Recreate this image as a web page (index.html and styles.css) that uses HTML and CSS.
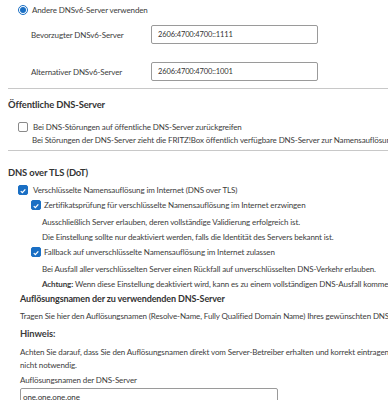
FILE: index.html
```html
<!DOCTYPE html>
<html lang="de">
<head>
  <meta charset="UTF-8" />
  <title>DNS-Server</title>
  <link rel="stylesheet" href="styles.css">
</head>
<body>
  <div class="page">

    <!-- DNSv6 servers -->
    <div class="opt-row">
      <span class="radio"><span class="radio-dot"></span></span>
      <span>Andere DNSv6-Server verwenden</span>
    </div>
    <div class="field-row">
      <label class="field-label">Bevorzugter DNSv6-Server</label>
      <div class="input">2606:4700:4700::1111</div>
    </div>
    <div class="field-row second">
      <label class="field-label">Alternativer DNSv6-Server</label>
      <div class="input">2606:4700:4700::1001</div>
    </div>

    <div class="sep"></div>

    <!-- Public DNS -->
    <div class="section-title first">Öffentliche DNS-Server</div>
    <div class="opt-row check-row">
      <span class="check"></span>
      <span>Bei DNS-Störungen auf öffentliche DNS-Server zurückgreifen</span>
    </div>
    <div class="desc lvl1">Bei Störungen der DNS-Server zieht die FRITZ!Box öffentlich verfügbare DNS-Server zur Namensauflösung heran.</div>

    <div class="sep lower"></div>

    <!-- DNS over TLS -->
    <div class="section-title dot">DNS over TLS (DoT)</div>
    <div class="opt-row check-row tls">
      <span class="check on"><svg viewBox="0 0 10 10" width="10" height="10"><path d="M2.2 5.2 L4.2 7.1 L7.9 3" fill="none" stroke="#fff" stroke-width="1.6"/></svg></span>
      <span>Verschlüsselte Namensauflösung im Internet (DNS over TLS)</span>
    </div>
    <div class="opt-row check-row sub">
      <span class="check on"><svg viewBox="0 0 10 10" width="10" height="10"><path d="M2.2 5.2 L4.2 7.1 L7.9 3" fill="none" stroke="#fff" stroke-width="1.6"/></svg></span>
      <span>Zertifikatsprüfung für verschlüsselte Namensauflösung im Internet erzwingen</span>
    </div>
    <div class="desc lvl2 gap">Ausschließlich Server erlauben, deren vollständige Validierung erfolgreich ist.</div>
    <div class="desc lvl2">Die Einstellung sollte nur deaktiviert werden, falls die Identität des Servers bekannt ist.</div>
    <div class="opt-row check-row sub flush">
      <span class="check on"><svg viewBox="0 0 10 10" width="10" height="10"><path d="M2.2 5.2 L4.2 7.1 L7.9 3" fill="none" stroke="#fff" stroke-width="1.6"/></svg></span>
      <span>Fallback auf unverschlüsselte Namensauflösung im Internet zulassen</span>
    </div>
    <div class="desc lvl2 gap">Bei Ausfall aller verschlüsselten Server einen Rückfall auf unverschlüsselten DNS-Verkehr erlauben.</div>
    <div class="desc lvl2"><b>Achtung:</b> Wenn diese Einstellung deaktiviert wird, kann es zu einem vollständigen DNS-Ausfall kommen.</div>

    <!-- Resolve names -->
    <div class="block">
      <div class="sub-title">Auflösungsnamen der zu verwendenden DNS-Server</div>
      <div class="text gap">Tragen Sie hier den Auflösungsnamen (Resolve-Name, Fully Qualified Domain Name) Ihres gewünschten DNS-Servers ein.</div>
      <div class="text hint">Hinweis:</div>
      <div class="text wrap">Achten Sie darauf, dass Sie den Auflösungsnamen direkt vom Server-Betreiber erhalten und korrekt eintragen. Eine Angabe des Ports ist<br>nicht notwendig.</div>
      <div class="text label">Auflösungsnamen der DNS-Server</div>
      <div class="input wide">one.one.one.one</div>
    </div>

  </div>
</body>
</html>
```

FILE: styles.css
```css
body {
  margin: 0;
  padding: 0;
  background-color: #fff;
  color: #3c3c3c;
  font-family: "Source Sans Pro", Lato, "Noto Sans", sans-serif;
  font-size: 8px;
  letter-spacing: -0.12px;
  overflow: hidden;
}

.page {
  padding: 3px 0 0 8px;
  width: 560px;
  white-space: nowrap;
}

/* option rows with radio / checkbox */
.opt-row {
  display: flex;
  align-items: center;
  height: 14px;
  padding-left: 10px;
}

.radio {
  width: 10px;
  height: 10px;
  border: 1px solid #1a6fc4;
  border-radius: 50%;
  box-sizing: border-box;
  display: flex;
  align-items: center;
  justify-content: center;
  margin-right: 4px;
}

.radio-dot {
  width: 6px;
  height: 6px;
  border-radius: 50%;
  background-color: #1a6fc4;
}

.check {
  width: 10px;
  height: 10px;
  box-sizing: border-box;
  border: 1px solid #8a8a8a;
  border-radius: 2px;
  margin-right: 5px;
  display: flex;
}

.check.on {
  background-color: #1a6fc4;
  border-color: #1a6fc4;
}

/* input fields */
.field-row {
  display: flex;
  align-items: center;
  margin-top: 8px;
}

.field-row.second {
  margin-top: 18px;
}

.field-label {
  width: 143px;
  padding-left: 23px;
  box-sizing: border-box;
}

.input {
  width: 167px;
  height: 19px;
  box-sizing: border-box;
  border: 1px solid #9a9a9a;
  border-radius: 2px;
  padding-left: 6px;
  line-height: 17px;
  font-size: 7.5px;
  color: #333;
}

.sep {
  height: 1px;
  background-color: #c8c8c8;
  margin-top: 7px;
}

.sep.lower {
  margin-top: 3px;
}

.section-title {
  font-weight: bold;
  font-size: 9.4px;
  height: 14px;
  line-height: 14px;
  color: #333;
}

.section-title.first {
  margin-top: 9px;
}

.section-title.dot {
  margin-top: 15px;
}

.check-row {
  margin-top: 8px;
}

.check-row.tls {
  margin-top: 3px;
}

.check-row.sub {
  margin-top: 1px;
  padding-left: 23px;
}

.check-row.sub.flush {
  margin-top: 0;
}

.check-row.sub .check {
  margin-right: 3px;
}

.desc {
  height: 15px;
  line-height: 15px;
}

.desc.lvl1 {
  height: 13px;
  line-height: 13px;
  padding-left: 24px;
}

.desc.lvl2 {
  padding-left: 34px;
}

.desc.gap {
  margin-top: 3px;
}

.block {
  padding-left: 12px;
}

.sub-title {
  font-weight: bold;
  font-size: 9px;
  height: 14px;
  line-height: 14px;
  color: #333;
}

.text {
  line-height: 14px;
}

.text.gap {
  margin-top: 3px;
}

.text.hint {
  margin-top: 4px;
  font-weight: bold;
  font-size: 9.4px;
}

.text.wrap {
  margin-top: 5px;
  line-height: 13px;
}

.text.label {
  margin-top: 1px;
}

.input.wide {
  width: 258px;
  margin-top: 1px;
  height: 20px;
  padding-left: 2px;
  font-size: 8px;
}
```
